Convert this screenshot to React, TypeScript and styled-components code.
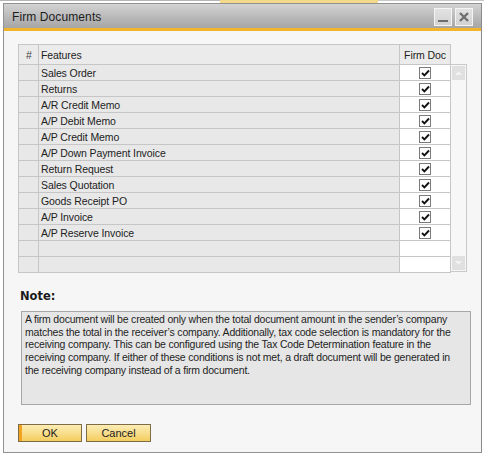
import React from 'react';
import styled, { createGlobalStyle } from 'styled-components';

const GlobalStyle = createGlobalStyle`
  html, body {
    margin: 0;
    padding: 0;
    background: #ffffff;
  }
  body {
    font-family: 'Liberation Sans', Arial, sans-serif;
    font-size: 10.5px;
    letter-spacing: -0.1px;
    color: #222222;
  }
`;

const features = [
  'Sales Order',
  'Returns',
  'A/R Credit Memo',
  'A/P Debit Memo',
  'A/P Credit Memo',
  'A/P Down Payment Invoice',
  'Return Request',
  'Sales Quotation',
  'Goods Receipt PO',
  'A/P Invoice',
  'A/P Reserve Invoice',
];

const noteLines = [
  'A firm document will be created only when the total document amount in the sender\u2019s company',
  'matches the total in the receiver\u2019s company. Additionally, tax code selection is mandatory for the',
  'receiving company. This can be configured using the Tax Code Determination feature in the',
  'receiving company. If either of these conditions is not met, a draft document will be generated in',
  'the receiving company instead of a firm document.',
];

const Page = styled.div`
  width: 484px;
  height: 454px;
  display: flex;
  flex-direction: column;
  overflow: hidden;
`;

const BehindStrip = styled.div`
  height: 3px;
  display: flex;
`;

const BehindPart = styled.div<{ $w: number; $bg: string; $tall?: boolean }>`
  width: ${({ $w }) => $w}px;
  height: ${({ $tall }) => ($tall ? 3 : 1)}px;
  background: ${({ $bg }) => $bg};
`;

const Window = styled.div`
  margin-left: 3px;
  width: 479px;
  height: 450px;
  box-sizing: border-box;
  border: 1px solid #929292;
  border-right-color: #8a8a8a;
  background: #f6f6f6;
  display: flex;
  flex-direction: column;
`;

const TitleBar = styled.div`
  height: 24px;
  display: flex;
  align-items: center;
  justify-content: space-between;
  padding: 0 8px 0 8px;
  background: linear-gradient(#d3d3d3, #b9b9b9 55%, #a6a6a6);
`;

const Title = styled.span`
  font-size: 12px;
  letter-spacing: 0.1px;
  color: #1c1c1c;
  margin-top: 1px;
`;

const TitleButtons = styled.div`
  display: flex;
  gap: 3px;
  margin-top: 1px;
`;

const TitleButton = styled.div`
  width: 18px;
  height: 18px;
  box-sizing: border-box;
  border: 1px solid #f4f4f4;
  background: linear-gradient(#e2e2e2, #d2d2d2);
  display: flex;
  align-items: center;
  justify-content: center;
`;

const AccentBar = styled.div`
  height: 3px;
  background: #f1b52b;
`;

const Body = styled.div`
  flex: 1;
  padding: 13px 0 0 14px;
  display: flex;
  flex-direction: column;
`;

const GridArea = styled.div`
  display: flex;
  align-items: flex-start;
`;

const Grid = styled.div`
  width: 433px;
  box-sizing: border-box;
  border-left: 1px solid #c6c6c6;
  border-top: 1px solid #c6c6c6;
`;

const Row = styled.div`
  display: grid;
  grid-template-columns: 20px 361px 51px;
`;

const Cell = styled.div<{ $head?: boolean; $white?: boolean; $center?: boolean }>`
  height: ${({ $head }) => ($head ? 20 : 16)}px;
  box-sizing: border-box;
  border-right: 1px solid #c6c6c6;
  border-bottom: 1px solid #c6c6c6;
  background: ${({ $white, $head }) => ($white ? '#ffffff' : $head ? '#ebebeb' : '#e8e8e8')};
  display: flex;
  align-items: center;
  justify-content: ${({ $center }) => ($center ? 'center' : 'flex-start')};
  padding-left: ${({ $center }) => ($center ? 0 : 2)}px;
  color: #222222;
  white-space: nowrap;
`;

const HashText = styled.span`
  margin-left: 5px;
  color: #444444;
`;

const CheckBox = styled.div`
  width: 12px;
  height: 12px;
  box-sizing: border-box;
  border: 1px solid #7a7a7a;
  background: #ffffff;
  display: flex;
  align-items: center;
  justify-content: center;
`;

const ScrollBar = styled.div`
  margin-top: 20px;
  width: 16px;
  height: 208px;
  box-sizing: border-box;
  border: 1px solid #c9c9c9;
  border-left: none;
  background: #f7f7f7;
  display: flex;
  flex-direction: column;
  justify-content: space-between;
  padding: 1px;
`;

const ScrollArrow = styled.div`
  height: 14px;
  background: #e0e0e0;
  display: flex;
  align-items: center;
  justify-content: center;
`;

const NoteLabel = styled.div`
  margin: 15px 0 0 2px;
  font-family: 'DejaVu Sans', Verdana, sans-serif;
  font-weight: bold;
  font-size: 11.5px;
  letter-spacing: 0;
  line-height: 16px;
  color: #1a1a1a;
`;

const NoteBox = styled.div`
  margin: 7px 0 0 3px;
  width: 450px;
  height: 94px;
  box-sizing: border-box;
  border: 1px solid #a7a7a7;
  background: #e6e6e6;
  padding: 1px 0 0 3px;
  letter-spacing: -0.2px;
  line-height: 12.7px;
  color: #1e1e1e;
  white-space: nowrap;
  overflow: hidden;
`;

const NoteLine = styled.div``;

const ButtonRow = styled.div`
  margin-top: 19px;
  display: flex;
  gap: 4px;
`;

const ActionButton = styled.button<{ $focused?: boolean }>`
  width: ${({ $focused }) => ($focused ? 64 : 65)}px;
  height: 18px;
  box-sizing: border-box;
  border: 1px solid #7e6c45;
  padding: 0;
  font-family: 'Liberation Sans', Arial, sans-serif;
  font-size: 11px;
  color: #222222;
  background: ${({ $focused }) =>
    $focused
      ? 'linear-gradient(90deg, #f2a21e 0, #f0a424 3px, transparent 3px), linear-gradient(#fcedb5, #f8dc88 55%, #f3cd5e)'
      : 'linear-gradient(#fcedb5, #f8dc88 55%, #f3cd5e)'};
`;

const Check = () => (
  <svg width="9" height="8" viewBox="0 0 9 8">
    <path d="M1 4 L3.4 6.4 L8 1.5" fill="none" stroke="#111" strokeWidth="1.9" />
  </svg>
);

const App: React.FC = () => {
  const rows = [...features, '', ''];
  return (
    <Page>
      <GlobalStyle />
      <BehindStrip>
        <BehindPart $w={220} $bg="#b4b4b4" />
        <BehindPart $w={158} $bg="#f3d98a" $tall />
        <BehindPart $w={106} $bg="#c8c8c8" />
      </BehindStrip>
      <Window>
        <TitleBar>
          <Title>Firm Documents</Title>
          <TitleButtons>
            <TitleButton>
              <svg width="10" height="10" viewBox="0 0 10 10">
                <rect x="0" y="8" width="10" height="2" fill="#6e6e6e" />
              </svg>
            </TitleButton>
            <TitleButton>
              <svg width="10" height="10" viewBox="0 0 10 10">
                <path d="M1 1 L9 9 M9 1 L1 9" stroke="#6e6e6e" strokeWidth="2.4" />
              </svg>
            </TitleButton>
          </TitleButtons>
        </TitleBar>
        <AccentBar />
        <Body>
          <GridArea>
            <Grid>
              <Row>
                <Cell $head>
                  <HashText>#</HashText>
                </Cell>
                <Cell $head>Features</Cell>
                <Cell $head $center>
                  Firm Doc
                </Cell>
              </Row>
              {rows.map((name, i) => (
                <Row key={i}>
                  <Cell />
                  <Cell>{name}</Cell>
                  <Cell $white $center>
                    {name && (
                      <CheckBox>
                        <Check />
                      </CheckBox>
                    )}
                  </Cell>
                </Row>
              ))}
            </Grid>
            <ScrollBar>
              <ScrollArrow>
                <svg width="7" height="4" viewBox="0 0 7 4">
                  <path d="M0 4 L3.5 0 L7 4 Z" fill="#f3f3f3" />
                </svg>
              </ScrollArrow>
              <ScrollArrow>
                <svg width="7" height="4" viewBox="0 0 7 4">
                  <path d="M0 0 L3.5 4 L7 0 Z" fill="#f3f3f3" />
                </svg>
              </ScrollArrow>
            </ScrollBar>
          </GridArea>
          <NoteLabel>Note:</NoteLabel>
          <NoteBox>
            {noteLines.map((line) => (
              <NoteLine key={line}>{line}</NoteLine>
            ))}
          </NoteBox>
          <ButtonRow>
            <ActionButton $focused>OK</ActionButton>
            <ActionButton>Cancel</ActionButton>
          </ButtonRow>
        </Body>
      </Window>
    </Page>
  );
};

export default App;
